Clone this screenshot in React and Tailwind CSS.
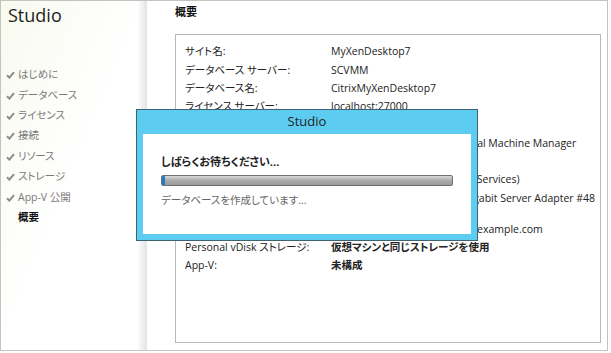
import React from 'react';

const FONT = "font-['Open_Sans','Noto_Sans_CJK_JP',sans-serif] [font-feature-settings:'palt']";

const navItems = ['はじめに', 'データベース', 'ライセンス', '接続', 'リソース', 'ストレージ', 'App-V 公開'];

const rows = [
  ['サイト名:', 'MyXenDesktop7'],
  ['データベース サーバー:', 'SCVMM'],
  ['データベース名:', 'CitrixMyXenDesktop7'],
  ['ライセンス サーバー:', 'localhost:27000'],
  ['接続:', '新規'],
  ['接続の種類:', 'Microsoft System Center Virtual Machine Manager'],
  ['接続アドレス:', 'scvmm.example.com'],
  ['ネットワーク:', 'XenDesktop VLAN1 (Terminal Services)'],
  ['', 'Intel(R) PRO/1000 MT Dual Gigabit Server Adapter #48'],
];

const lowerRows = [
  ['ホスト:', 'scvmm-01.xendesktop-lab.ad.example.com'],
  ['Personal vDisk ストレージ:', '仮想マシンと同じストレージを使用'],
  ['App-V:', '未構成'],
];

const Check = () => (
  <svg width="9" height="8" viewBox="0 0 9 8" className="shrink-0">
    <path d="M1 4.2 L3.4 6.6 L8 1.2" fill="none" stroke="#8c8c8c" strokeWidth="2" />
  </svg>
);

const Row = ({ label, value, bold }) => (
  <div className="flex h-[18.3px] items-center">
    <span className="w-[146px] shrink-0 text-[#222]">{label}</span>
    <span className={`whitespace-nowrap text-[#222] ${bold ? 'font-bold' : ''}`}>{value}</span>
  </div>
);

export default function App() {
  return (
    <div className={`w-[611px] h-[353px] bg-white ${FONT}`}>
      <div className="relative flex h-[351px] w-[608px] overflow-hidden border border-[#c3c3c3]">
        {/* Sidebar */}
        <div className="relative w-[146px] shrink-0 bg-gradient-to-br from-[#f8faef] via-white to-white">
          <div className="pl-[7px] pt-[1px] text-[18px] leading-[26px] text-[#1e1e1e]">Studio</div>
          <div className="mt-[37px] flex flex-col">
            {navItems.map((item) => (
              <div key={item} className="flex h-[20.4px] items-center gap-[3px] pl-[5px] text-[10.5px] text-[#7a7a7a]">
                <Check />
                <span>{item}</span>
              </div>
            ))}
            <div className="flex h-[20.4px] items-center pl-[17px] text-[10.5px] font-bold text-[#111]">概要</div>
          </div>
          <div className="absolute right-0 top-0 bottom-0 w-[10px] bg-gradient-to-r from-transparent to-[#e1e3e6]" />
        </div>

        {/* Main */}
        <div className="flex-1 pl-[28px]">
          <div className="pt-[2px] text-[11px] font-bold leading-[17px] text-[#111]">概要</div>
          <div className="mt-[14px] h-[309px] w-[426px] border border-[#b8b8b8] pl-[9px] pt-[8px] text-[10.5px]">
            {rows.map(([l, v], i) => (
              <Row key={i} label={l} value={v} />
            ))}
            <div className="mt-[12.8px]">
              {lowerRows.map(([l, v], i) => (
                <Row key={i} label={l} value={v} bold={i > 0} />
              ))}
            </div>
          </div>
        </div>

        {/* Progress dialog */}
        <div className="absolute left-[135px] top-[108px] flex h-[132px] w-[342px] flex-col border border-[#3f6272] bg-[#5ccdf0]">
          <div className="flex h-[24px] items-center justify-center text-[13px] text-[#222]">Studio</div>
          <div className="mx-[6px] mb-[6px] flex-1 bg-white pl-[18px] pt-[20px]">
            <div className="text-[11px] font-bold leading-[16px] text-[#222]">しばらくお待ちください...</div>
            <div className="relative mt-[4.5px] h-[11px] w-[292px] overflow-hidden rounded-[2px] border border-[#707070] bg-gradient-to-b from-[#d9d9d9] via-[#ababab] to-[#9a9a9a]">
              <div className="absolute left-0 top-0 bottom-0 w-[3px] bg-[#1f7fc6]" />
            </div>
            <div className="mt-[6.5px] text-[10.5px] leading-[16px] text-[#666]">データベースを作成しています...</div>
          </div>
        </div>
      </div>
    </div>
  );
}
